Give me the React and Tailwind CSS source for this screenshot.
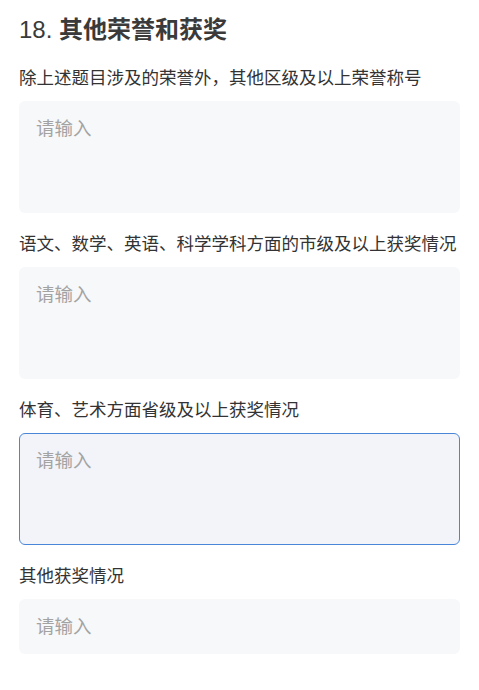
// App.jsx
const fields = [
  { label: "除上述题目涉及的荣誉外，其他区级及以上荣誉称号", h: "h-[112px]" },
  { label: "语文、数学、英语、科学学科方面的市级及以上获奖情况", h: "h-[112px]" },
  { label: "体育、艺术方面省级及以上获奖情况", h: "h-[112px]", focused: true },
  { label: "其他获奖情况", h: "h-[55px]" },
];

const Field = ({ label, h, focused }) => (
  <div>
    <div className="text-[17.5px] leading-[24px] text-[#333] mb-[11px] whitespace-nowrap">
      {label}
    </div>
    <textarea
      readOnly
      placeholder="请输入"
      className={`block w-full ${h} resize-none rounded-[6px] border px-[16px] pt-[15px] text-[18.5px] leading-[24px] outline-none placeholder:text-[#a3a3a3] ${
        focused
          ? "border-[#4a86d8] bg-[#f2f4f9]"
          : "border-transparent bg-[#f7f8fa]"
      }`}
      style={{ fontFamily: '"Liberation Sans", "Noto Sans CJK SC", sans-serif' }}
    />
  </div>
);

export default function App() {
  return (
    <div
      className="min-h-[690px] w-[479px] bg-white pl-[19px] pr-[19px] pt-[14px]"
      style={{ fontFamily: '"Liberation Sans", "Noto Sans CJK SC", sans-serif' }}
    >
      <h2 className="text-[24px] font-bold leading-[32px] text-[#3a3a3a] mb-[20px]">
        <span className="font-normal">18.</span> 其他荣誉和获奖
      </h2>
      <div className="flex flex-col gap-[19px]">
        {fields.map((f) => (
          <Field key={f.label} {...f} />
        ))}
      </div>
    </div>
  );
}
